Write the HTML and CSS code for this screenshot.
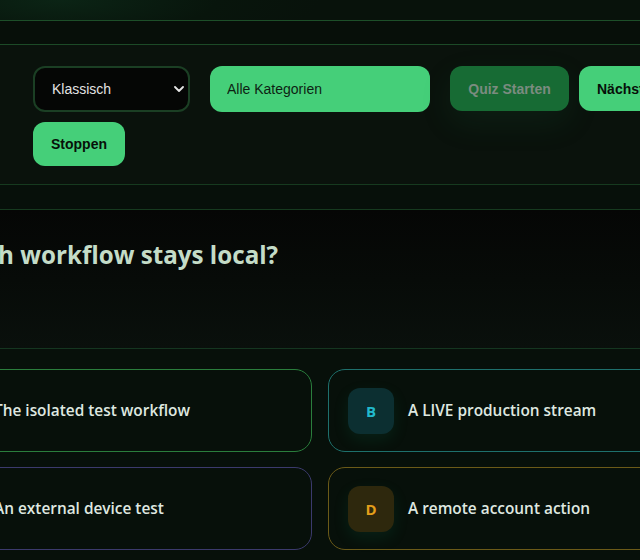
FILE: index.html
```html
<!DOCTYPE html>
<html lang="de">
<head>
<meta charset="utf-8">
<title>Quiz</title>
<link rel="stylesheet" href="styles.css">
</head>
<body>
  <header class="top-bar"></header>
  <div class="sub-bar"></div>
  <section class="controls">
    <div class="controls-row">
      <div class="select-wrap">
        <select class="mode-select">
          <option>Klassisch</option>
        </select>
        <svg class="chevron" width="10" height="6" viewBox="0 0 10 6"><path d="M1 1l4 4 4-4" fill="none" stroke="#e6e6e6" stroke-width="1.8" stroke-linecap="round" stroke-linejoin="round"/></svg>
      </div>
      <input class="category" type="text" value="Alle Kategorien">
      <button class="btn btn-disabled">Quiz Starten</button>
      <button class="btn">Nächste Frage</button>
      <button class="btn btn-stop">Stoppen</button>
    </div>
  </section>
  <div class="spacer-bar"></div>
  <section class="question">
    <h2 class="question-text">Which workflow stays local?</h2>
  </section>
  <section class="answers">
    <div class="answer-grid">
      <div class="card card-a"><span class="badge badge-a">A</span><span class="answer-text">The isolated test workflow</span></div>
      <div class="card card-b"><span class="badge badge-b">B</span><span class="answer-text">A LIVE production stream</span></div>
      <div class="card card-c"><span class="badge badge-c">C</span><span class="answer-text">An external device test</span></div>
      <div class="card card-d"><span class="badge badge-d">D</span><span class="answer-text">A remote account action</span></div>
    </div>
  </section>
</body>
</html>
```
FILE: styles.css
```css
* { box-sizing: border-box; }
html, body { margin: 0; padding: 0; }
body {
  width: 640px;
  height: 560px;
  overflow: hidden;
  background: #07100a;
  font-family: "Open Sans", "Liberation Sans", sans-serif;
}
.top-bar {
  height: 21px;
  background: radial-gradient(ellipse 260px 60px at 60px 0, #0b2415 0%, #08150c 60%, #08120b 100%);
  border-bottom: 1px solid #1d4f29;
}
.sub-bar {
  height: 24px;
  background: #070f09;
  border-bottom: 1px solid #1c4a27;
}
.controls {
  height: 140px;
  background: #0a120c;
  border-bottom: 1px solid #163a1f;
  padding: 21px 0 0 33px;
}
.controls-row {
  width: 740px;
  display: flex;
  flex-wrap: wrap;
  align-items: flex-start;
  gap: 10px;
}
.select-wrap {
  position: relative;
  width: 157px;
  height: 46px;
  margin-right: 10px;
}
.mode-select {
  appearance: none;
  -webkit-appearance: none;
  width: 100%;
  height: 100%;
  background: #050605;
  border: 2px solid #1b3f24;
  border-radius: 12px;
  color: #e2e2e2;
  font-family: "Liberation Sans", Arial, sans-serif;
  font-size: 14px;
  padding: 0 0 0 17px;
  outline: none;
}
.chevron {
  position: absolute;
  right: 6px;
  top: 20px;
}
.category {
  width: 220px;
  height: 46px;
  margin-right: 10px;
  border: none;
  border-radius: 12px;
  background: #45cf79;
  color: #0d1f13;
  font-family: "Liberation Sans", Arial, sans-serif;
  font-size: 14px;
  padding: 0 17px;
  outline: none;
}
.btn {
  height: 45px;
  border: none;
  border-radius: 12px;
  background: #45cf79;
  color: #071009;
  font-family: "Liberation Sans", Arial, sans-serif;
  font-weight: 700;
  font-size: 14px;
  padding: 0 18px;
  white-space: nowrap;
}
.btn-disabled {
  width: 119px;
  background: #176b34;
  color: #7b8c80;
  box-shadow: 0 12px 32px rgba(30, 120, 70, 0.12);
}
.btn-stop {
  height: 44px;
  width: 92px;
  padding: 0;
}
.spacer-bar {
  height: 25px;
  background: #07100a;
  border-bottom: 1px solid #163a1f;
}
.question {
  height: 139px;
  background: linear-gradient(180deg, #050605 0%, #070b08 50%, #0a100c 100%);
  border-bottom: 1px solid #153620;
  padding-top: 27px;
}
.question-text {
  margin: 0 0 0 -61px;
  font-size: 24.2px;
  font-weight: 700;
  line-height: 36px;
  color: #c4dcc7;
  white-space: nowrap;
}
.answers {
  padding-top: 20px;
}
.answer-grid {
  width: 812px;
  margin-left: -86px;
  display: grid;
  grid-template-columns: 398px 398px;
  column-gap: 16px;
  row-gap: 15px;
}
.card {
  height: 83px;
  display: flex;
  align-items: center;
  gap: 14px;
  padding: 0 19px;
  border: 1px solid #2a7a3a;
  border-radius: 17px;
  background: #07100a;
}
.card-a { border-color: #2a7d3c; }
.card-b { border-color: #1e706c; }
.card-c { border-color: #3b3a6c; }
.card-d { border-color: #6b5a18; }
.badge {
  flex: none;
  width: 46px;
  height: 46px;
  border-radius: 12px;
  display: flex;
  align-items: center;
  justify-content: center;
  font-size: 15px;
  font-weight: 700;
  box-shadow: 0 6px 16px rgba(20, 160, 110, 0.12);
}
.badge-a { background: #0d3019; color: #45cf79; }
.badge-b { background: #0c2f31; color: #22b9cc; }
.badge-c { background: #1c1a3a; color: #8a7cf0; }
.badge-d { background: #2e280d; color: #e39e1a; }
.answer-text {
  font-size: 15.4px;
  font-weight: 600;
  color: #dfe8e0;
  white-space: nowrap;
}
```
